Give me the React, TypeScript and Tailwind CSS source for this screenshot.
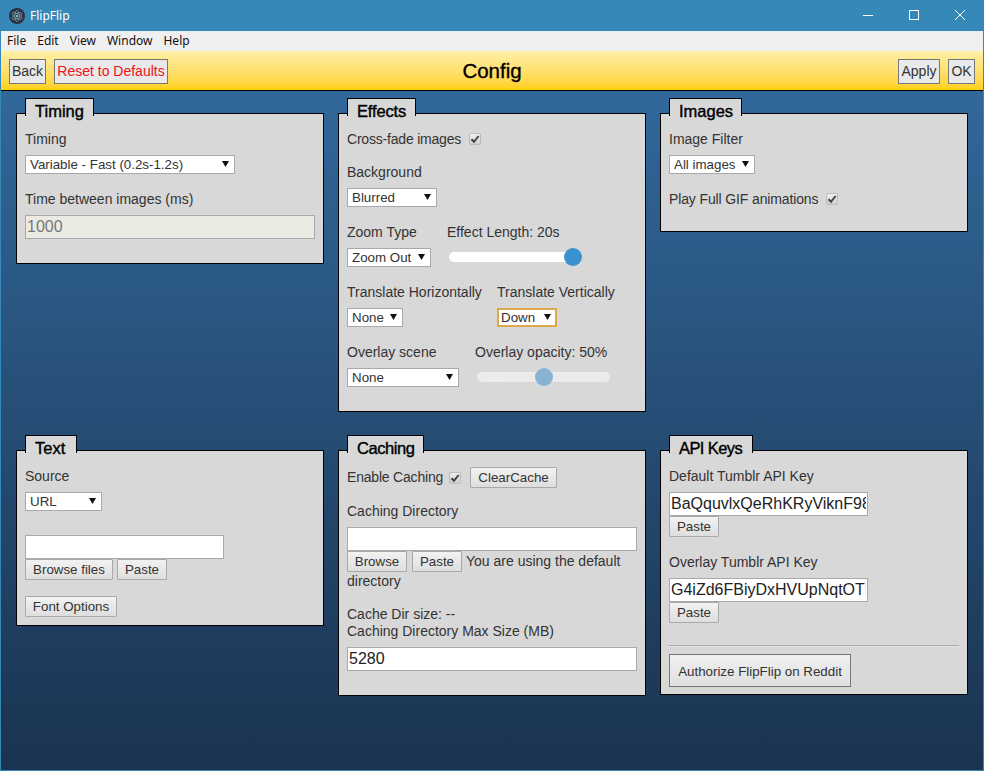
import React from "react";

function Panel({ title, className, tabClass, children }: { title: string; className: string; tabClass: string; children: React.ReactNode }) {
  return (
    <section className={"relative border border-black bg-[#d8d8d8] pt-[17px] px-2 " + className}>
      <h2 className={"absolute left-2 top-[-16px] h-[16px] box-content whitespace-nowrap border border-b-0 border-black bg-[#d8d8d8] pl-[9px] pt-[1px] text-[16.5px] leading-[22px] text-black [-webkit-text-stroke:0.4px_black] " + tabClass}>
        {title}
      </h2>
      {children}
    </section>
  );
}

function Label({ children, className = "" }: { children: React.ReactNode; className?: string }) {
  return <div className={"h-4 leading-4 mb-2 whitespace-nowrap " + className}>{children}</div>;
}

function Select({ value, className, focus }: { value: string; className: string; focus?: boolean }) {
  return (
    <div className={"relative h-[19px] " + className}>
      <select
        defaultValue={value}
        className={
          "block h-full w-full appearance-none rounded-none bg-white text-[13.333px] leading-[15px] text-[#333] outline-none " +
          (focus ? "border-2 border-[#dca84a] pl-[2px] pb-[1px]" : "border border-[#a9a9a9] pl-[4px]")
        }
      >
        <option>{value}</option>
      </select>
      <svg className="absolute right-[6px] top-[6px] pointer-events-none" width="7" height="6" viewBox="0 0 7 6">
        <path d="M0 0H7L3.5 6Z" fill="#111" />
      </svg>
    </div>
  );
}

function Check() {
  return (
    <span className="inline-flex h-3 w-3 items-center justify-center rounded-[2px] border border-[#bbb] bg-gradient-to-b from-[#f0f0f0] to-[#cfcfcf] align-middle">
      <svg width="10" height="10" viewBox="0 0 10 10">
        <path d="M1.5 5.2L4 7.8L8.6 2" fill="none" stroke="#444" strokeWidth="2" />
      </svg>
    </span>
  );
}

function Btn({ children, className = "" }: { children: React.ReactNode; className?: string }) {
  return (
    <button className={"inline-block h-[21px] rounded-[1px] border border-[#a9a9a9] bg-gradient-to-b from-[#f2f2f2] to-[#dedede] text-[13.333px] leading-[19px] text-[#333] align-top " + className}>
      {children}
    </button>
  );
}

function TextInput({ value = "", className = "w-full", disabled }: { value?: string; className?: string; disabled?: boolean }) {
  return (
    <input
      readOnly
      defaultValue={value}
      className={
        "block h-[24px] border border-[#a9a9a9] px-[1px] text-[16px] outline-none " +
        (disabled ? "bg-[#ebebe4] text-[#777] " : "bg-white text-[#222] ") +
        className
      }
    />
  );
}

function Slider({ value, faded }: { value: number; faded?: boolean }) {
  return (
    <input
      type="range"
      min={0}
      max={100}
      defaultValue={value}
      className={
        "ml-[2px] block h-[18px] w-[133px] appearance-none bg-transparent outline-none [&::-webkit-slider-runnable-track]:h-[10px] [&::-webkit-slider-runnable-track]:rounded-full [&::-webkit-slider-runnable-track]:bg-white [&::-webkit-slider-thumb]:mt-[-4px] [&::-webkit-slider-thumb]:h-[18px] [&::-webkit-slider-thumb]:w-[18px] [&::-webkit-slider-thumb]:appearance-none [&::-webkit-slider-thumb]:rounded-full [&::-webkit-slider-thumb]:bg-[#3b92d1] " +
        (faded ? "opacity-50" : "")
      }
    />
  );
}

function HeaderBtn({ children, className = "" }: { children: React.ReactNode; className?: string }) {
  return (
    <button className={"h-[25px] whitespace-nowrap border border-[#777] bg-[#e9e9e9] text-[14px] leading-[22px] " + className}>{children}</button>
  );
}

export default function App() {
  return (
    <div className="flex h-[771px] w-[984px] flex-col overflow-hidden border-x border-b border-[#3688b8] font-['Liberation_Sans',Arial,sans-serif] text-[14px] text-[#333]">
      <div className="flex h-[31px] shrink-0 items-center bg-[#3688b8] font-['Noto_Sans',sans-serif] text-[12px] text-white">
        <svg className="ml-[8px]" width="16" height="16" viewBox="0 0 16 16">
          <circle cx="8" cy="8" r="8" fill="#2b2e3b" />
          <g fill="none" stroke="#9feaf9" strokeWidth="0.7" opacity="0.7">
            <ellipse cx="8" cy="8" rx="5.6" ry="2.3" transform="rotate(30 8 8)" />
            <ellipse cx="8" cy="8" rx="5.6" ry="2.3" transform="rotate(90 8 8)" />
            <ellipse cx="8" cy="8" rx="5.6" ry="2.3" transform="rotate(150 8 8)" />
          </g>
          <circle cx="8" cy="8" r="1" fill="#9feaf9" />
        </svg>
        <span className="ml-[5px]">FlipFlip</span>
        <div className="ml-auto flex items-center">
          <svg width="46" height="31" viewBox="0 0 46 31"><path d="M18 15.5H28" stroke="#fff" /></svg>
          <svg width="46" height="31" viewBox="0 0 46 31"><rect x="18.5" y="10.5" width="9" height="9" fill="none" stroke="#fff" /></svg>
          <svg width="46" height="31" viewBox="0 0 46 31"><path d="M18 10L28 20M28 10L18 20" stroke="#fff" /></svg>
        </div>
      </div>

      <nav className="flex h-[20px] shrink-0 items-center gap-[11px] bg-[#f0f0f0] pl-[6px] font-['Noto_Sans',sans-serif] text-[12px] text-[#111]">
        <span>File</span>
        <span>Edit</span>
        <span>View</span>
        <span>Window</span>
        <span>Help</span>
      </nav>

      <header className="flex h-[40px] shrink-0 items-center border-b border-black bg-gradient-to-b from-[#fff0a6] to-[#ffd000] px-2 pt-[1px]">
        <div className="flex flex-1 gap-2">
          <HeaderBtn className="w-[37px]">Back</HeaderBtn>
          <HeaderBtn className="w-[114px] text-[#f01020]">Reset to Defaults</HeaderBtn>
        </div>
        <h1 className="text-[20.5px] text-black [-webkit-text-stroke:0.35px_black]">Config</h1>
        <div className="flex flex-1 justify-end gap-2">
          <HeaderBtn className="w-[42px]">Apply</HeaderBtn>
          <HeaderBtn className="w-[27px]">OK</HeaderBtn>
        </div>
      </header>

      <main className="grid flex-1 grid-cols-[308px_308px_308px] content-start items-start gap-x-[14px] gap-y-[38px] bg-gradient-to-b from-[#31689a] to-[#1a3350] pl-[15px] pt-[22px]">
        <Panel title="Timing" className="pb-[24px]" tabClass="w-[58px]">
          <Label>Timing</Label>
          <Select value="Variable - Fast (0.2s-1.2s)" className="w-[210px] mb-[17px]" />
          <Label>Time between images (ms)</Label>
          <TextInput value="1000" disabled />
        </Panel>

        <Panel title="Effects" className="pb-[24px]" tabClass="w-[58px] tracking-[-0.15px]">
          <div className="mb-[17px] flex h-4 items-center gap-[8px]">
            <span className="tracking-[-0.2px]">Cross-fade images</span>
            <Check />
          </div>
          <Label>Background</Label>
          <Select value="Blurred" className="w-[90px] mb-[17px]" />
          <div className="flex gap-4 mb-[17px]">
            <div>
              <Label>Zoom Type</Label>
              <Select value="Zoom Out" className="w-[84px]" />
            </div>
            <div>
              <Label>Effect Length: 20s</Label>
              <Slider value={100} />
            </div>
          </div>
          <div className="flex gap-4 mb-[17px]">
            <div className="w-[134px]">
              <Label>Translate Horizontally</Label>
              <Select value="None" className="w-[56px]" />
            </div>
            <div>
              <Label>Translate Vertically</Label>
              <Select value="Down" className="w-[60px]" focus />
            </div>
          </div>
          <div className="flex gap-4">
            <div>
              <Label>Overlay scene</Label>
              <Select value="None" className="w-[112px]" />
            </div>
            <div>
              <Label>Overlay opacity: 50%</Label>
              <Slider value={50} faded />
            </div>
          </div>
        </Panel>

        <Panel title="Images" className="pb-[24px]" tabClass="w-[62px]">
          <Label>Image Filter</Label>
          <Select value="All images" className="w-[86px] mb-[17px]" />
          <div className="flex h-4 items-center gap-[8px]">
            <span className="tracking-[-0.13px]">Play Full GIF animations</span>
            <Check />
          </div>
        </Panel>

        <Panel title="Text" className="pb-[8px]" tabClass="w-[41px]">
          <Label>Source</Label>
          <Select value="URL" className="w-[77px] mb-[24px]" />
          <TextInput className="w-[199px]" />
          <div className="flex gap-1">
            <Btn className="w-[88px]">Browse files</Btn>
            <Btn className="w-[50px]">Paste</Btn>
          </div>
          <Btn className="mt-[16px] block w-[92px]">Font Options</Btn>
        </Panel>

        <Panel title="Caching" className="pb-[24px]" tabClass="w-[66px] tracking-[-0.45px]">
          <div className="mb-[15px] mt-[-1px] flex h-[21px] items-center">
            <span className="tracking-[-0.2px]">Enable Caching</span>
            <span className="ml-[6px] flex"><Check /></span>
            <Btn className="ml-[9px] w-[87px]">ClearCache</Btn>
          </div>
          <Label>Caching Directory</Label>
          <TextInput />
          <div className="h-[40px] leading-[20px]">
            <Btn className="mb-[-1px] w-[60px]">Browse</Btn>
            <Btn className="mb-[-1px] ml-[5px] w-[50px]">Paste</Btn>
            <span className="ml-1">You are using the default directory</span>
          </div>
          <div className="mt-[15px] h-[17px] leading-4">Cache Dir size: --</div>
          <Label>Caching Directory Max Size (MB)</Label>
          <TextInput value="5280" />
        </Panel>

        <Panel title="API Keys" className="pb-[7px]" tabClass="w-[73px] tracking-[-0.6px]">
          <Label>Default Tumblr API Key</Label>
          <TextInput value="BaQquvlxQeRhKRyViknF98" className="w-[199px]" />
          <Btn className="block w-[50px]">Paste</Btn>
          <Label className="mt-[17px]">Overlay Tumblr API Key</Label>
          <TextInput value="G4iZd6FBiyDxHVUpNqtOTD" className="w-[199px]" />
          <Btn className="block w-[50px]">Paste</Btn>
          <hr className="mt-[22px] mb-[7px] h-[2px] border-t border-b border-t-[#aaa] border-b-[#e6e6e6]" />
          <button className="block h-[33px] w-[182px] border border-[#777] bg-gradient-to-b from-[#f0f0f0] to-[#e0e0e0] pt-[2px] text-[13.333px] text-[#333]">
            Authorize FlipFlip on Reddit
          </button>
        </Panel>
      </main>
    </div>
  );
}
